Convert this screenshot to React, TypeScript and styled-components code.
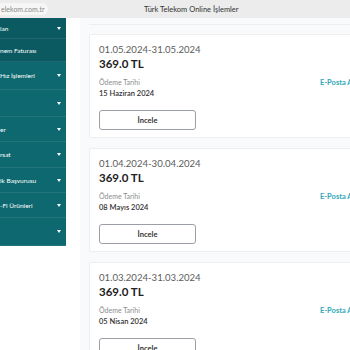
import React from 'react';
import styled, { createGlobalStyle } from 'styled-components';

const GlobalStyle = createGlobalStyle`
	html, body {
		margin: 0;
		padding: 0;
		width: 350px;
		height: 350px;
		overflow: hidden;
		background: #ffffff;
		font-family: Lato, 'Open Sans', sans-serif;
	}
	* {
		box-sizing: border-box;
	}
`;

const Page = styled.div`
	display: flex;
	flex-direction: column;
	width: 350px;
	height: 350px;
	overflow: hidden;
`;

const BrowserBar = styled.header`
	display: flex;
	align-items: center;
	gap: 96px;
	height: 18px;
	flex-shrink: 0;
	background: #ececec;
`;

const UrlPill = styled.div`
	display: flex;
	align-items: center;
	width: 48px;
	height: 12px;
	padding-left: 1px;
	background: #f6f6f6;
	border-radius: 0 6px 6px 0;
	font-size: 7px;
	color: #8a8a8a;
	white-space: nowrap;
	overflow: hidden;
`;

const Title = styled.span`
	font-size: 7.5px;
	color: #333333;
	white-space: nowrap;
`;

const Body = styled.div`
	display: flex;
	flex: 1;
	min-height: 0;
`;

const Sidebar = styled.nav`
	display: flex;
	flex-direction: column;
	align-self: flex-start;
	width: 66px;
	flex-shrink: 0;
	background: #0e6870;
`;

const NavItem = styled.div<{ $h: number; $dark?: boolean }>`
	display: flex;
	align-items: center;
	justify-content: space-between;
	height: ${(p) => p.$h}px;
	padding-right: 5px;
	background: ${(p) => (p.$dark ? '#0b5a62' : '#0e6870')};
	border-bottom: 1px solid rgba(255, 255, 255, 0.09);
	color: #ffffff;
	font-size: 6.5px;
	white-space: nowrap;
	overflow: hidden;
`;

const Caret = styled.span`
	width: 0;
	height: 0;
	border-left: 2.5px solid transparent;
	border-right: 2.5px solid transparent;
	border-top: 3px solid #ffffff;
	flex-shrink: 0;
`;

const Main = styled.main`
	flex: 1;
	min-width: 0;
	overflow: hidden;
	padding-left: 14px;
	background: #ffffff;
`;

const Feed = styled.div`
	display: flex;
	flex-direction: column;
	gap: 10px;
	padding-top: 6px;
	padding-left: 9px;
	background: #f9fafb;
`;

const CardTail = styled.div`
	width: 440px;
	height: 1px;
	margin-bottom: -1px;
	background: #eceef0;
`;

const Card = styled.section`
	display: grid;
	grid-template-columns: 221px 200px;
	align-items: center;
	width: 440px;
	height: 104px;
	padding: 9px 9px 8px;
	background: #ffffff;
	border: 1px solid #eceef0;
	border-radius: 2px;
`;

const Period = styled.div`
	grid-column: 1;
	font-size: 9.6px;
	line-height: 12px;
	color: #5c5c5c;
`;

const Amount = styled.div`
	grid-column: 1;
	font-size: 11.5px;
	line-height: 16px;
	font-weight: 700;
	color: #222222;
`;

const Label = styled.div`
	grid-column: 1;
	margin-top: 5px;
	font-size: 7px;
	line-height: 9px;
	color: #8c8c8c;
`;

const Value = styled.div`
	grid-column: 1;
	margin-top: 2px;
	font-size: 7.5px;
	line-height: 10px;
	font-weight: 600;
	color: #333333;
`;

const Button = styled.button`
	grid-column: 1;
	width: 97px;
	height: 20px;
	margin-top: 11px;
	padding: 0;
	background: #ffffff;
	border: 1px solid #9aa0a5;
	border-radius: 3px;
	font-family: inherit;
	font-size: 7.5px;
	font-weight: 700;
	color: #333333;
`;

const EmailLink = styled.span`
	grid-column: 2;
	grid-row: 3;
	margin-top: 6px;
	font-size: 7.5px;
	font-weight: 700;
	color: #30a8ba;
	white-space: nowrap;
`;

const navItems = [
	{ label: 'lan', h: 21, dark: true, caret: true },
	{ label: 'nem Faturası', h: 23, dark: true, caret: false },
	{ label: 'Hız İşlemleri', h: 28, caret: true },
	{ label: '', h: 27, caret: true },
	{ label: 'er', h: 25, caret: true },
	{ label: 'rsat', h: 26, caret: true },
	{ label: 'ik Başvurusu', h: 25, caret: true },
	{ label: '-Fi Ürünleri', h: 25, caret: true },
	{ label: '', h: 28, caret: true },
];

const invoices = [
	{ period: '01.05.2024-31.05.2024', amount: '369.0 TL', due: '15 Haziran 2024' },
	{ period: '01.04.2024-30.04.2024', amount: '369.0 TL', due: '08 Mayıs 2024' },
	{ period: '01.03.2024-31.03.2024', amount: '369.0 TL', due: '05 Nisan 2024' },
];

export default function App() {
	return (
		<Page>
			<GlobalStyle />
			<BrowserBar>
				<UrlPill>elekom.com.tr</UrlPill>
				<Title>Türk Telekom Online İşlemler</Title>
			</BrowserBar>
			<Body>
				<Sidebar>
					{navItems.map((item, i) => (
						<NavItem key={i} $h={item.h} $dark={item.dark}>
							<span>{item.label}</span>
							{item.caret && <Caret />}
						</NavItem>
					))}
				</Sidebar>
				<Main>
					<Feed>
						<CardTail />
						{invoices.map((inv) => (
							<Card key={inv.period}>
								<Period>{inv.period}</Period>
								<Amount>{inv.amount}</Amount>
								<Label>Ödeme Tarihi</Label>
								<Value>{inv.due}</Value>
								<Button>İncele</Button>
								<EmailLink>E-Posta Adresime Gönder</EmailLink>
							</Card>
						))}
					</Feed>
				</Main>
			</Body>
		</Page>
	);
}
